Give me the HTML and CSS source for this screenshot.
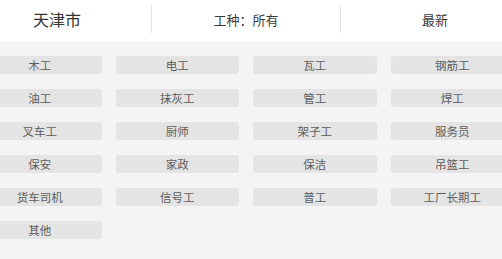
FILE: index.html
```html
<!DOCTYPE html>
<html>
  <head>
    <meta charset='UTF-8'>
    <meta name='viewport' content='width=device-width, initial-scale=1.0'>
    <title>工种筛选</title>
    <link rel="stylesheet" href="styles.css">
  </head>
  <body>
    <div class='frame'>
      <div class='page'>
        <div class='header'>
          <div class='header__item header__item--city'>天津市</div>
          <div class='header__item'>工种：所有</div>
          <div class='header__item'>最新</div>
        </div>
        <div class='content'>
          <div class='content__grid'>
            <div class='grid__tag'>木工</div>
            <div class='grid__tag'>电工</div>
            <div class='grid__tag'>瓦工</div>
            <div class='grid__tag'>钢筋工</div>
            <div class='grid__tag'>油工</div>
            <div class='grid__tag'>抹灰工</div>
            <div class='grid__tag'>管工</div>
            <div class='grid__tag'>焊工</div>
            <div class='grid__tag'>叉车工</div>
            <div class='grid__tag'>厨师</div>
            <div class='grid__tag'>架子工</div>
            <div class='grid__tag'>服务员</div>
            <div class='grid__tag'>保安</div>
            <div class='grid__tag'>家政</div>
            <div class='grid__tag'>保洁</div>
            <div class='grid__tag'>吊篮工</div>
            <div class='grid__tag'>货车司机</div>
            <div class='grid__tag'>信号工</div>
            <div class='grid__tag'>普工</div>
            <div class='grid__tag'>工厂长期工</div>
            <div class='grid__tag'>其他</div>
          </div>
        </div>
      </div>
    </div>
  </body>
</html>
```

FILE: styles.css
```css
html, body {
  margin: 0;
  height: 100%;
  background-color: #f4f4f4;
  font-family: "Noto Sans CJK SC", "Noto Sans", sans-serif;
}

.frame {
  width: 100%;
  height: 100%;
  overflow: hidden;
}

.page {
  width: 566px;
  margin-left: -37px;
}

.header {
  display: flex;
  height: 41px;
  background-color: #fff;
}

.header__item {
  flex: 1;
  display: flex;
  align-items: center;
  justify-content: center;
  font-size: 13px;
  color: #3a3a3a;
  border-left: 1px solid #e2e2e2;
  margin: 5px 0 8px;
}

.header__item:first-child {
  border-left: none;
}

.header__item--city {
  font-size: 16px;
  color: #333;
}

.content {
  padding: 15px 15px 0 15px;
}

.content__grid {
  display: grid;
  grid-template-columns: repeat(4, 1fr);
  column-gap: 14px;
  row-gap: 15px;
}

.grid__tag {
  height: 18px;
  line-height: 18px;
  text-align: center;
  font-size: 11.5px;
  color: #5c5c5c;
  background-color: #e4e4e4;
  border-radius: 3px;
}
```
